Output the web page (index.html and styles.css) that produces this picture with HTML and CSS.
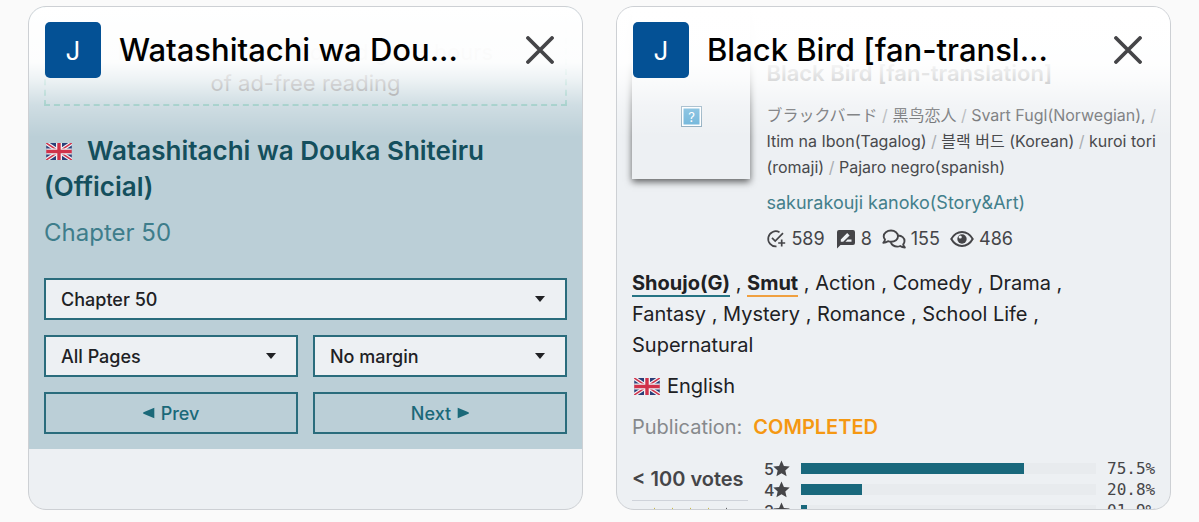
FILE: index.html
```html
<!DOCTYPE html>
<html lang="en">
<head>
    <meta charset="UTF-8">
    <title>Tabs</title>
    <link rel="stylesheet" href="styles.css">
</head>
<body>
<svg class="defs">
    <symbol id="flag" viewBox="0 0 60 40">
        <rect width="60" height="40" fill="#2b3f78"/>
        <path d="M0 0L60 40M60 0L0 40" stroke="#eef0f4" stroke-width="9"/>
        <path d="M0 0L60 40M60 0L0 40" stroke="#d0324a" stroke-width="3.5"/>
        <path d="M30 0V40M0 20H60" stroke="#eef0f4" stroke-width="14"/>
        <path d="M30 0V40M0 20H60" stroke="#d0324a" stroke-width="8"/>
    </symbol>
    <symbol id="close" viewBox="0 0 28 28">
        <path d="M2 2L26 26M26 2L2 26" fill="none" stroke="#454548" stroke-width="3.8" stroke-linecap="round"/>
    </symbol>
    <symbol id="star" viewBox="0 0 24 24">
        <path d="M12 .8L15.4 8.4L23.6 9.2L17.4 14.7L19.2 22.9L12 18.6L4.8 22.9L6.6 14.7L.4 9.2L8.6 8.4Z"/>
    </symbol>
</svg>
<div class="tabs">
    <div class="tab">
        <div class="tab-bar">
            <span class="tab-icon">J</span>
            <span class="tab-title t1">Watashitachi wa Dou...</span>
            <svg class="tab-close"><use href="#close"/></svg>
        </div>
        <div class="reader">
            <div class="ad">
                <p class="ad-first">here to watch an ad and get 3 hours</p>
                <p class="ad-last">of ad-free reading</p>
            </div>
            <h1 class="reader-title">
                <span class="line r1"><svg class="flag"><use href="#flag"/></svg>Watashitachi wa Douka Shiteiru</span>
                <span class="line r2">(Official)</span>
            </h1>
            <p class="reader-chapter"><span class="r3">Chapter 50</span></p>
            <div class="controls">
                <div class="select wide"><span class="c1">Chapter 50</span><i class="caret"></i></div>
                <div class="select"><span class="c2">All Pages</span><i class="caret"></i></div>
                <div class="select"><span class="c3">No margin</span><i class="caret"></i></div>
                <div class="button"><svg class="arrow" viewBox="0 0 12 12"><path d="M11.3 .8V11.2L.5 6.8Q-.3 6 .5 5.2Z"/></svg><span>Prev</span></div>
                <div class="button"><span>Next</span><svg class="arrow" viewBox="0 0 12 12"><path d="M.7 .8V11.2L11.5 6.8Q12.3 6 11.5 5.2Z"/></svg></div>
            </div>
        </div>
    </div>

    <div class="tab">
        <div class="tab-bar">
            <span class="tab-icon">J</span>
            <span class="tab-title t2">Black Bird [fan-transl...</span>
            <svg class="tab-close"><use href="#close"/></svg>
        </div>
        <div class="manga">
            <div class="info">
                <div class="cover">
                    <svg class="missing" viewBox="0 0 21 21">
                        <rect x=".5" y=".5" width="20" height="20" fill="#fff" stroke="#8caabd"/>
                        <rect x="2.5" y="2.5" width="16" height="16" fill="#65b0d8"/>
                        <text x="10.5" y="15.5" text-anchor="middle">?</text>
                    </svg>
                </div>
                <div class="info-text">
                    <h2 class="name"><span class="n1">Black Bird [fan-translation]</span></h2>
                    <div class="alt">
                        <span class="line a1 faded">ブラックバード <i>/</i> 黑鸟恋人 <i>/</i> Svart Fugl(Norwegian), <i>/</i></span>
                        <span class="line a2">Itim na Ibon(Tagalog) <i>/</i> 블랙 버드 (Korean) <i>/</i> kuroi tori</span>
                        <span class="line a3">(romaji) <i>/</i> Pajaro negro(spanish)</span>
                    </div>
                    <p class="author">sakurakouji kanoko(Story&amp;Art)</p>
                    <div class="stats">
                        <svg class="s1" viewBox="0 0 20 20"><path d="M13.5 3.2A7.6 7.6 0 1 0 10.5 17.4M6 8.8L9.2 12L17 4.2M15.7 10.5V17.5M12.2 14H19.2" fill="none" stroke="#454548" stroke-width="1.7"/></svg><span>589</span>
                        <svg class="s2" viewBox="0 0 20 20"><path d="M3 1H17Q19 1 19 3V14Q19 16 17 16H4.5L1 19.5V3Q1 1 3 1Z" fill="#454548"/><path d="M4.8 12.8V10.4L11.2 4L13.6 6.4L7.2 12.8ZM9.4 12.8L11.6 10.6H15.5V12.8Z" fill="#eef1f4"/></svg><span>8</span>
                        <svg class="s3" viewBox="0 0 24 20"><path d="M9 1.5C13 1.5 16 4 16 7.2S13 12.8 9 12.8C7.9 12.8 6.9 12.6 6 12.2C4.8 13.1 3.2 13.8 1.3 13.8C2.3 12.7 2.9 11.6 3 10.5C2.1 9.6 1.7 8.4 1.7 7.2C1.7 4 5 1.5 9 1.5ZM16 6.5C20 6.7 22.5 9.2 22.5 12C22.5 13.3 22 14.4 21.2 15.3C21.3 16.5 21.9 17.5 22.8 18.5C21 18.5 19.4 17.9 18.2 17C17.4 17.4 16.4 17.6 15.3 17.6C12.2 17.6 9.8 16.2 8.7 13.2" fill="none" stroke="#454548" stroke-width="1.9" stroke-linejoin="round"/></svg><span>155</span>
                        <svg class="s4" viewBox="0 0 24 18"><path d="M1.3 9Q5.3 2 12 2T22.7 9Q18.7 16 12 16T1.3 9Z" fill="none" stroke="#454548" stroke-width="2"/><circle cx="12" cy="9" r="4.7" fill="#454548"/><circle cx="10.2" cy="7" r="1.6" fill="#eef1f4"/></svg><span>486</span>
                    </div>
                </div>
            </div>
            <div class="genres">
                <span class="line g1"><b class="shoujo">Shoujo(G)</b> , <b class="smut">Smut</b> , Action , Comedy , Drama ,</span>
                <span class="line g2">Fantasy , Mystery , Romance , School Life ,</span>
                <span class="line g3">Supernatural</span>
            </div>
            <p class="language"><svg class="flag"><use href="#flag"/></svg><span>English</span></p>
            <p class="publication"><span>Publication:</span><b>COMPLETED</b></p>
            <div class="rating">
                <div class="votes">
                    <b>&lt; 100 votes</b>
                    <div class="stars">
                        <svg><use href="#star"/></svg><svg><use href="#star"/></svg><svg><use href="#star"/></svg><svg><use href="#star"/></svg><svg class="off"><use href="#star"/></svg>
                    </div>
                </div>
                <div class="bars">
                    <div class="row"><span>5</span><svg class="star"><use href="#star"/></svg><div class="track"><div class="fill" style="width: 75.5%"></div></div><code>75.5%</code></div>
                    <div class="row"><span>4</span><svg class="star"><use href="#star"/></svg><div class="track"><div class="fill" style="width: 20.8%"></div></div><code>20.8%</code></div>
                    <div class="row"><span>3</span><svg class="star"><use href="#star"/></svg><div class="track"><div class="fill" style="width: 1.9%"></div></div><code>01.9%</code></div>
                </div>
            </div>
        </div>
    </div>
</div>
</body>
</html>
```
FILE: styles.css
```css
* {
    margin: 0;
    padding: 0;
    box-sizing: border-box;
}

body {
    height: 522px;
    overflow: hidden;
    background-color: #fafafa;
    font-family: Inter, "Noto Sans CJK JP", "Noto Sans CJK KR", sans-serif;
    color: #202124;
}

.defs {
    display: none;
}

.tabs {
    display: flex;
    gap: 33px;
    padding: 6px 28px;
}

.tab {
    position: relative;
    flex: none;
    width: 555px;
    height: 504px;
    border: 1px solid #cdd0d4;
    border-radius: 18px;
    background-color: #edf0f3;
    overflow: hidden;
}

/* title bar floats over the page */
.tab-bar {
    position: absolute;
    z-index: 1;
    top: 0;
    left: 0;
    right: 0;
    height: 130px;
    display: flex;
    align-items: flex-start;
    padding: 15px 28px 0 16px;
    background: linear-gradient(rgba(255, 255, 255, 1) 0, rgba(255, 255, 255, .96) 55px, rgba(255, 255, 255, .75) 72px, rgba(255, 255, 255, .3) 98px, rgba(255, 255, 255, 0) 130px);
}

.tab-icon {
    width: 56px;
    height: 56px;
    border-radius: 5px;
    background-color: #045195;
    color: #fff;
    font-size: 26px;
    line-height: 57px;
    text-align: center;
}

.tab-title {
    flex: 1;
    margin-left: 18px;
    font-size: 31px;
    font-weight: 500;
    line-height: 56px;
    color: #000;
    white-space: nowrap;
}

.tab-close {
    width: 28px;
    height: 28px;
    margin-top: 14px;
}

.line {
    display: block;
    white-space: nowrap;
}

.flag {
    width: 26px;
    height: 17px;
}

/* reader */
.reader {
    height: 442px;
    padding: 0 15px;
    background-color: #bbcfd7;
}

.ad {
    display: flex;
    flex-direction: column;
    justify-content: flex-end;
    height: 99px;
    padding-bottom: 5px;
    border: 2px dashed #84bfb8;
    border-top: 0;
    font-size: 22px;
    line-height: 31px;
    text-align: center;
    color: #77797c;
    white-space: nowrap;
}

.reader-title {
    margin-top: 27px;
    font-size: 26px;
    font-weight: 600;
    line-height: 36px;
    color: #144f5d;
}

.reader-title .flag {
    margin: 0 15px 0 2px;
}

.reader-chapter {
    margin-top: 10px;
    font-size: 24px;
    line-height: 36px;
    color: #3e7d8b;
}

.controls {
    display: grid;
    grid-template-columns: 1fr 1fr;
    gap: 15px;
    margin-top: 27px;
}

.select,
.button {
    display: flex;
    align-items: center;
    height: 42px;
    border: 2px solid #2a6c7c;
    font-size: 18px;
    font-weight: 500;
}

.select {
    justify-content: space-between;
    padding: 0 20px 0 15px;
    background-color: #edf0f3;
}

.wide {
    grid-column: span 2;
}

.caret {
    border: 5.5px solid transparent;
    border-top: 6px solid #202124;
    border-bottom: 0;
}

.button {
    justify-content: center;
    gap: 6px;
    color: #1b6979;
}

.arrow {
    width: 12px;
    height: 12px;
    fill: #1b6979;
}

/* manga page */
.manga {
    padding: 0 14px 0 15px;
}

.info {
    display: flex;
    gap: 16px;
}

.cover {
    display: flex;
    justify-content: center;
    width: 124px;
    height: 172px;
    padding-top: 99px;
    background-color: #edf0f3;
    box-shadow: 0 3px 7px rgba(0, 0, 0, .6);
}

.missing {
    width: 21px;
    height: 21px;
}

.missing text {
    font-size: 13px;
    fill: #fff;
}

.info-text {
    padding-top: 51px;
}

.name {
    font-size: 22px;
    font-weight: 600;
    line-height: 30px;
    color: #77797c;
    white-space: nowrap;
}

.alt {
    margin-top: 14px;
    font-size: 16px;
    line-height: 26px;
    color: #48494c;
}

.alt .line {
    height: 26px;
}

.alt i {
    font-style: normal;
    color: #aaadb1;
}

.faded {
    color: #626467;
}

.author {
    margin-top: 8px;
    font-size: 18px;
    line-height: 30px;
    color: #437f8b;
    white-space: nowrap;
}

.stats {
    display: flex;
    align-items: center;
    margin-top: 8px;
    font-size: 18px;
    line-height: 26px;
    color: #454548;
}

.stats span {
    margin-left: 5px;
}

.s1, .s2 {
    width: 20px;
    height: 20px;
}

.s2 {
    margin-left: 11px;
}

.s3 {
    width: 24px;
    height: 20px;
    margin-left: 10px;
}

.s4 {
    width: 24px;
    height: 18px;
    margin-left: 10px;
}

.genres {
    margin-top: 16px;
    font-size: 20px;
    line-height: 31px;
}

.genres b {
    display: inline-block;
    line-height: 24px;
    font-weight: 700;
    border-bottom: 2px solid #267484;
}

.genres .smut {
    border-color: #f0a040;
}

.genres .line {
    height: 31px;
}

.language {
    display: flex;
    align-items: center;
    gap: 7px;
    margin-top: 10px;
    padding-left: 2px;
    font-size: 20px;
    line-height: 31px;
}

.publication {
    display: flex;
    gap: 11px;
    margin-top: 10px;
    font-size: 20px;
    line-height: 31px;
    color: #86898c;
}

.publication b {
    font-weight: 600;
    color: #f59812;
}

.rating {
    display: flex;
    gap: 16px;
    margin-top: 15px;
    color: #454548;
}

.votes {
    width: 116px;
    padding-top: 6px;
    white-space: nowrap;
}

.votes b {
    display: block;
    height: 37px;
    border-bottom: 1px solid #cfd3da;
    font-size: 20px;
    font-weight: 600;
    line-height: 31px;
}

.stars {
    display: flex;
    gap: 1px;
    justify-content: center;
    padding-top: 6px;
}

.stars svg {
    width: 17px;
    height: 17px;
    fill: #c4b024;
}

.stars .off {
    fill: #454548;
}

.bars {
    flex: 1;
}

.row {
    display: flex;
    align-items: center;
    height: 21px;
    font-size: 16px;
    font-weight: 500;
}

.row span {
    width: 9px;
}

.star {
    width: 17px;
    height: 17px;
    fill: #454548;
}

.track {
    width: 295px;
    height: 11px;
    margin-left: 11px;
    background-color: #e8ebee;
}

.fill {
    height: 11px;
    background-color: #19687c;
}

.row code {
    margin-left: 11px;
    font-family: "DejaVu Sans Mono", monospace;
    font-size: 16px;
    font-weight: 400;
}
```
